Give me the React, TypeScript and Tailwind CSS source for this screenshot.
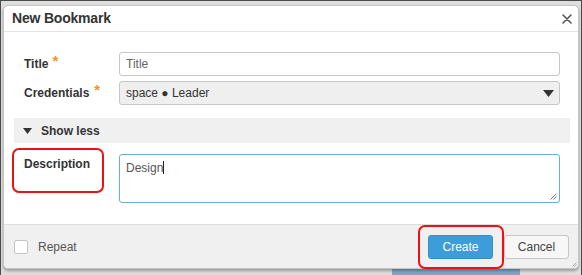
import React from "react";

export default function App() {
  return (
    <div className="relative w-[582px] h-[275px] overflow-hidden border-t border-x border-[#4a4a4a] bg-[#dedede] font-['Liberation_Sans',Arial,sans-serif]">
      {/* partially hidden content behind dialog */}
      <div className="absolute left-[391px] top-[267px] w-[128px] h-[10px] bg-[#7fa6c6]" />

      {/* dialog */}
      <div className="relative ml-[2px] mt-[4px] w-[576px] h-[264px] flex flex-col rounded-[5px] border border-[#c4c4c4] bg-white shadow-[0_2px_3px_rgba(0,0,0,0.3)] overflow-hidden">
        {/* header */}
        <div className="h-[26px] shrink-0 flex items-center justify-between pl-[8px] pr-[6px] border-b border-[#e3e3e3]">
          <span className="text-[14px] font-bold text-[#333] tracking-[-0.2px]">New Bookmark</span>
          <svg width="10" height="10" viewBox="0 0 10 10">
            <path d="M1 1 L9 9 M9 1 L1 9" stroke="#555" strokeWidth="1.6" strokeLinecap="round" />
          </svg>
        </div>

        {/* body */}
        <div className="flex-1 pl-[20px] pr-[18px] pt-[20px]">
          <div className="flex items-center">
            <div className="w-[95px] text-[12px] font-bold text-[#333] flex items-start">
              Title<span className="ml-[4px] text-[15px] leading-[12px] text-[#f0961e]">*</span>
            </div>
            <input
              placeholder="Title"
              className="flex-1 h-[24px] rounded-[3px] border border-[#c6c6c6] px-[6px] text-[12px] text-[#333] placeholder:text-[#666] outline-none bg-white"
            />
          </div>
          <div className="flex items-center mt-[5px]">
            <div className="w-[95px] text-[12px] font-bold text-[#333] flex items-start">
              Credentials<span className="ml-[5px] text-[15px] leading-[12px] text-[#f0961e]">*</span>
            </div>
            <div className="flex-1 h-[24px] rounded-[3px] border border-[#c6c6c6] bg-[#efefef] pl-[6px] pr-[5px] flex items-center justify-between text-[12px] text-[#333]">
              <span>space ● Leader</span>
              <svg width="11" height="7" viewBox="0 0 11 7">
                <path d="M0 0 H11 L5.5 7 Z" fill="#333" />
              </svg>
            </div>
          </div>

          <div className="mt-[13px] -ml-[10px] -mr-[10px] h-[25px] bg-[#f0f0f0] flex items-center pl-[9px] text-[12px] font-bold text-[#333]">
            <svg width="9" height="6" viewBox="0 0 9 6" className="mr-[9px]">
              <path d="M0 0 H9 L4.5 6 Z" fill="#333" />
            </svg>
            Show less
          </div>

          <div className="flex mt-[11px]">
            <div className="w-[95px] pt-[1px] text-[12px] font-bold text-[#333]">Description</div>
            <div className="relative flex-1 h-[49px] rounded-[3px] border border-[#66ade2] px-[6px] pt-[4px] text-[12px] text-[#555]">
              <span>Design</span>
              <span className="inline-block w-px h-[13px] bg-[#222] align-[-2px]" />
              <svg width="7" height="7" viewBox="0 0 7 7" className="absolute right-[2px] bottom-[2px]">
                <path d="M6.5 0.5 L0.5 6.5 M6.5 3.5 L3.5 6.5" stroke="#777" strokeWidth="1" />
              </svg>
            </div>
          </div>
        </div>

        {/* footer */}
        <div className="relative h-[44px] shrink-0 border-t border-[#dcdcdc] bg-[#f0f0f0] flex items-center justify-between pl-[10px] pr-[9px]">
          <div className="flex items-center">
            <div className="w-[14px] h-[14px] rounded-[2px] border border-[#c4c4c4] bg-white" />
            <span className="ml-[10px] text-[12px] text-[#555]">Repeat</span>
          </div>
          <div className="flex items-center gap-[11px]">
            <div className="w-[65px] h-[24px] rounded-[3px] bg-[#3d9ddb] border border-[#3590cc] flex items-center justify-center text-[12px] text-white">
              Create
            </div>
            <div className="w-[65px] h-[24px] rounded-[3px] bg-[#f7f7f7] border border-[#c6c6c6] flex items-center justify-center text-[12px] text-[#444]">
              Cancel
            </div>
          </div>
          <svg width="5" height="5" viewBox="0 0 5 5" className="absolute right-[1px] bottom-[1px]">
            <path d="M4.5 0.5 L0.5 4.5 M4.5 2.5 L2.5 4.5" stroke="#999" strokeWidth="0.8" />
          </svg>
        </div>
      </div>

      {/* red annotations */}
      <div className="absolute left-[11px] top-[147px] w-[92px] h-[45px] rounded-[7px] border-[2.5px] border-[#ee1111]" />
      <div className="absolute left-[417px] top-[224px] w-[86px] h-[44px] rounded-[7px] border-[2.5px] border-[#ee1111]" />
    </div>
  );
}
